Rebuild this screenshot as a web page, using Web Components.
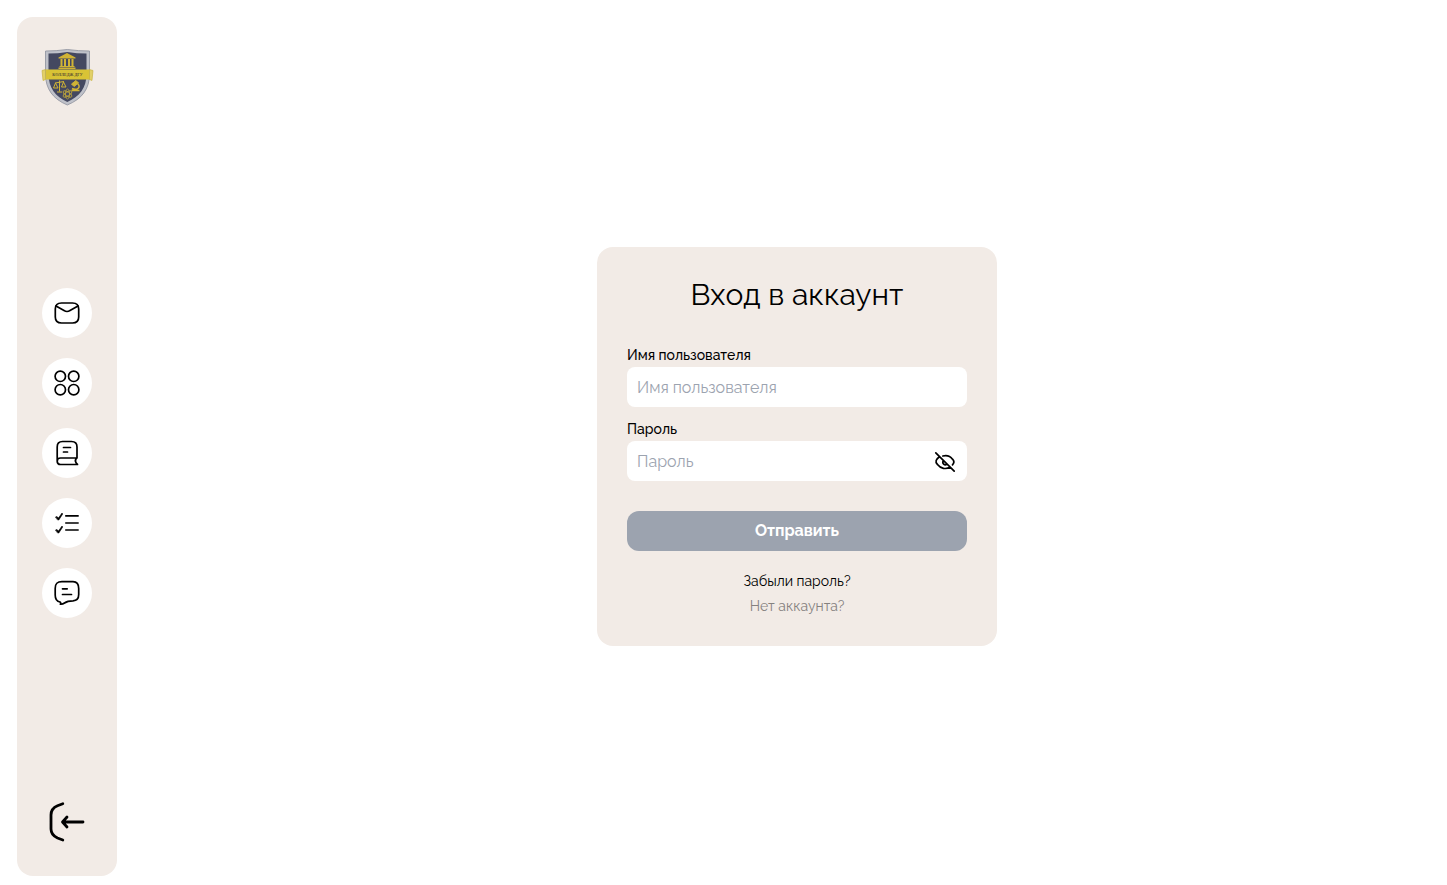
<!DOCTYPE html>
<html lang="ru">
<head>
<meta charset="utf-8">
<meta name="viewport" content="width=device-width, initial-scale=1">
<title>Вход в аккаунт</title>
<style>
  html, body { height: 100%; }
  body { margin: 0; background: #fff; color: #000; font-family: Raleway, Lato, "Open Sans", sans-serif; --panel: #f2ebe6; }
</style>
</head>
<body>
<app-shell>
  <side-bar slot="side"></side-bar>
  <login-card heading="Вход в аккаунт">
    <form-field label="Имя пользователя" type="text"></form-field>
    <form-field label="Пароль" type="password"></form-field>
  </login-card>
</app-shell>

<script>
const define = (name, html, setup) => {
  const template = document.createElement('template');
  template.innerHTML = html;
  customElements.define(name, class extends HTMLElement {
    constructor() {
      super();
      this.attachShadow({ mode: 'open' }).append(template.content.cloneNode(true));
    }
    connectedCallback() { if (setup) setup(this, this.shadowRoot); }
  });
};

define('app-shell', `
  <style>
    :host { display: flex; gap: 30px; box-sizing: border-box; min-height: 100%; padding: 17px 0 9px 17px; }
    main { flex: 1; display: flex; align-items: center; justify-content: center; }
  </style>
  <slot name="side"></slot>
  <main><slot></slot></main>
`);

define('college-logo', `
  <style>
    :host { display: block; width: 60px; height: 60px; }
    svg { display: block; width: 100%; height: 100%; }
    text { font: bold 4px "Liberation Serif", serif; }
  </style>
  <svg viewBox="0 0 60 60" role="img" aria-label="Колледж ДГУ">
    <path d="M8.500 4Q19 4 30.300 2.500Q42 4 52.500 4V27C52.500 42 45 52 30.300 58C16 52 8.500 42 8.500 27Z" fill="#bfc1c9" stroke="#8c8f9c" stroke-width=".8"/>
    <path d="M11.500 6.500Q21 6.500 30.300 5Q40 6.500 49.500 6.500V27C49.500 41 42.500 49.500 30.300 55C18.500 49.500 11.500 41 11.500 27Z" fill="#444860"/>
    <g fill="#d0b335">
      <path d="M21.500 10.500L30 6L38.500 10.500V11.500H21.500Z"/>
      <path d="M23.500 12H25.500V19H23.500ZM27 12H29V19H27ZM31 12H33V19H31ZM34.500 12H36.500V19H34.500ZM22.500 19H37.500V20H22.500ZM21.500 20.500H38.500V22H21.500Z"/>
      <path d="M9 22.500H52.500V32.500H9Z" fill="#d9c335"/>
    </g>
    <path d="M5 23.500L8.500 22.500V32.500L6 33.500ZM56 23.500L52.500 22.500V32.500L55 33.500Z" fill="#e2d067" stroke="#c4ae35" stroke-width=".6"/>
    <text x="30.500" y="29" text-anchor="middle" fill="#5b5230">КОЛЛЕДЖ ДГУ</text>
    <g fill="none" stroke="#d0b335" stroke-width="1">
      <path d="M22.500 33.500V44.500M18 36L27 34.500M20 45H25M18.500 36L16.500 41H21L18.500 36M26.500 35L24.500 40H29L26.500 35"/>
      <path d="M34.500 43.500H42.500M35 41.500C40.500 44 44.500 40 40.500 36.500" stroke-width="1.500"/>
      <path d="M34.500 37L39 33.500L41.500 36L37 39.500Z" fill="#d0b335"/>
      <ellipse cx="30.500" cy="47" rx="5" ry="2" transform="rotate(30 30.500 47)" stroke-width=".7"/>
      <ellipse cx="30.500" cy="47" rx="5" ry="2" transform="rotate(90 30.500 47)" stroke-width=".7"/>
      <ellipse cx="30.500" cy="47" rx="5" ry="2" transform="rotate(150 30.500 47)" stroke-width=".7"/>
    </g>
  </svg>
`);

const ICONS = {
  mail: '<path d="M13.300 21C13.300 16.500 15.500 15 19.500 15H30.500C34.500 15 36.700 16.500 36.700 21V29C36.700 33.500 34.500 35 30.500 35H19.500C15.500 35 13.300 33.500 13.300 29Z"/><path d="M14 18L22 22.500Q25 24.500 28 22.500L36 18"/>',
  grid: '<circle cx="18.300" cy="18.300" r="5.200"/><circle cx="31.700" cy="18.300" r="5.200"/><circle cx="18.300" cy="31.700" r="5.200"/><circle cx="31.700" cy="31.700" r="5.200"/>',
  book: '<path d="M15.200 33.500V19Q15.200 13.500 20.500 13.500H29.500Q35 13.500 35 19V30H18.500Q15.200 30 15.200 33.200Q15.200 36.500 18.500 36.500H35.500Q32 33.500 34.500 30M21.500 19.500H28.500M21.500 24H25.500"/>',
  tasks: '<path stroke-linecap="butt" d="M23.200 17.800H36.700M23.200 25H36.700M23.200 32H36.700"/><path fill="currentColor" stroke-width=".6" d="M13.700 19L15 18.500L16.500 20L20 15L20.700 16L16.800 22H16ZM13.700 32L15 31.500L16.500 33L20 28L20.700 29L16.800 35H16Z"/>',
  chat: '<path d="M18 34C14.500 33.500 13.200 31.500 13.200 27V20.500C13.200 15.500 15 13.600 20 13.600H31C35 13.600 36.700 15.500 36.700 20.500V26.500C36.700 31 35 32.600 31 32.800C27.500 32.800 24.500 33.500 22.500 35Q20.500 36.500 18.300 36.200Q19.300 35 18 34ZM20.500 20.800H25.200M20.500 26.500H29.500"/>'
};

define('nav-button', `
  <style>
    :host { display: block; }
    a { display: block; width: 50px; height: 50px; border-radius: 50%; background: #fff; color: inherit; }
    svg { display: block; width: 100%; height: 100%; fill: none; stroke: currentColor; stroke-width: 1.700; stroke-linecap: round; stroke-linejoin: round; }
  </style>
  <a href="#"><svg viewBox="0 0 50 50" aria-hidden="true"></svg></a>
`, (host, root) => {
  root.querySelector('a').setAttribute('aria-label', host.getAttribute('label'));
  root.querySelector('svg').innerHTML = ICONS[host.getAttribute('icon')];
});

define('side-bar', `
  <style>
    :host { display: flex; flex-direction: column; align-items: center; justify-content: space-between; box-sizing: border-box; width: 100px; padding: 30px 20px; border-radius: 16px; background: var(--panel); }
    nav { display: flex; flex-direction: column; gap: 20px; }
    button { display: block; padding: 0; border: 0; background: none; color: inherit; }
    button svg { display: block; width: 48px; height: 48px; fill: none; stroke: currentColor; stroke-width: 2.800; stroke-linecap: round; stroke-linejoin: round; }
  </style>
  <college-logo></college-logo>
  <nav>
    <nav-button icon="mail" label="Почта"></nav-button>
    <nav-button icon="grid" label="Разделы"></nav-button>
    <nav-button icon="book" label="Журнал"></nav-button>
    <nav-button icon="tasks" label="Задания"></nav-button>
    <nav-button icon="chat" label="Сообщения"></nav-button>
  </nav>
  <button type="button" aria-label="Войти"><svg viewBox="0 0 48 48"><path d="M19.800 5.800L14.500 7.800Q8 10.500 8 17V31Q8 37 14.500 40L19.800 42M40 24H20M24 19L19.500 24L24 29"/></svg></button>
`);

define('form-field', `
  <style>
    :host { display: flex; flex-direction: column; gap: 2px; }
    label { font-size: 14px; line-height: 20px; font-weight: 500; }
    .box { display: flex; align-items: center; height: 40px; box-sizing: border-box; padding: 0 10px; border-radius: 8px; background: #fff; }
    input { flex: 1; min-width: 0; height: 100%; padding: 0; border: 0; outline: 0; background: none; color: inherit; font: inherit; font-size: 16px; }
    input::placeholder { color: #9ca3af; opacity: 1; }
    button { padding: 0; border: 0; background: none; color: inherit; }
    button[hidden] { display: none; }
    svg { display: block; width: 24px; height: 24px; fill: none; stroke: currentColor; stroke-width: 1.700; stroke-linecap: round; stroke-linejoin: round; }
  </style>
  <label for="field"></label>
  <div class="box">
    <input id="field">
    <button type="button" aria-label="Показать пароль" hidden>
      <svg viewBox="0 0 24 24"><path d="M2.800 3.800L21.200 22.200M6.500 7.800C3.200 10 1.600 13 4.500 15.500C7.500 19.500 13 20.800 17 18M9.800 7C14 5.800 17.500 7.500 19.500 10.200Q22.300 13 19.500 15.800M10.300 11.600C8.800 14.300 11.500 16.800 14 15.200"/></svg>
    </button>
  </div>
`, (host, root) => {
  const input = root.querySelector('input');
  const type = host.getAttribute('type');
  root.querySelector('label').textContent = host.getAttribute('label');
  input.placeholder = host.getAttribute('label');
  input.type = type;
  const toggle = root.querySelector('button');
  toggle.hidden = type !== 'password';
  toggle.onclick = () => { input.type = input.type === 'password' ? 'text' : 'password'; };
});

define('login-card', `
  <style>
    :host { display: block; box-sizing: border-box; width: 400px; max-width: 100%; padding: 30px; border-radius: 16px; background: var(--panel); }
    h1 { margin: 0 0 32px; font-size: 30px; line-height: 36px; font-weight: 400; text-align: center; }
    .fields { display: flex; flex-direction: column; gap: 12px; }
    button { display: block; width: 100%; height: 40px; margin: 30px 0 20px; padding: 0 0 2px; border: 0; border-radius: 12px; background: #9ca3af; color: #fff; font: inherit; font-size: 16px; font-weight: 700; }
    .links { display: flex; flex-direction: column; align-items: center; gap: 5px; font-size: 14px; line-height: 20px; }
    a { color: inherit; text-decoration: none; }
    .muted { color: #85817f; }
  </style>
  <form>
    <h1></h1>
    <div class="fields"><slot></slot></div>
    <button type="submit">Отправить</button>
    <div class="links">
      <a href="#">Забыли пароль?</a>
      <a href="#" class="muted">Нет аккаунта?</a>
    </div>
  </form>
`, (host, root) => {
  root.querySelector('h1').textContent = host.getAttribute('heading');
  root.querySelector('form').onsubmit = event => event.preventDefault();
});
</script>
</body>
</html>
